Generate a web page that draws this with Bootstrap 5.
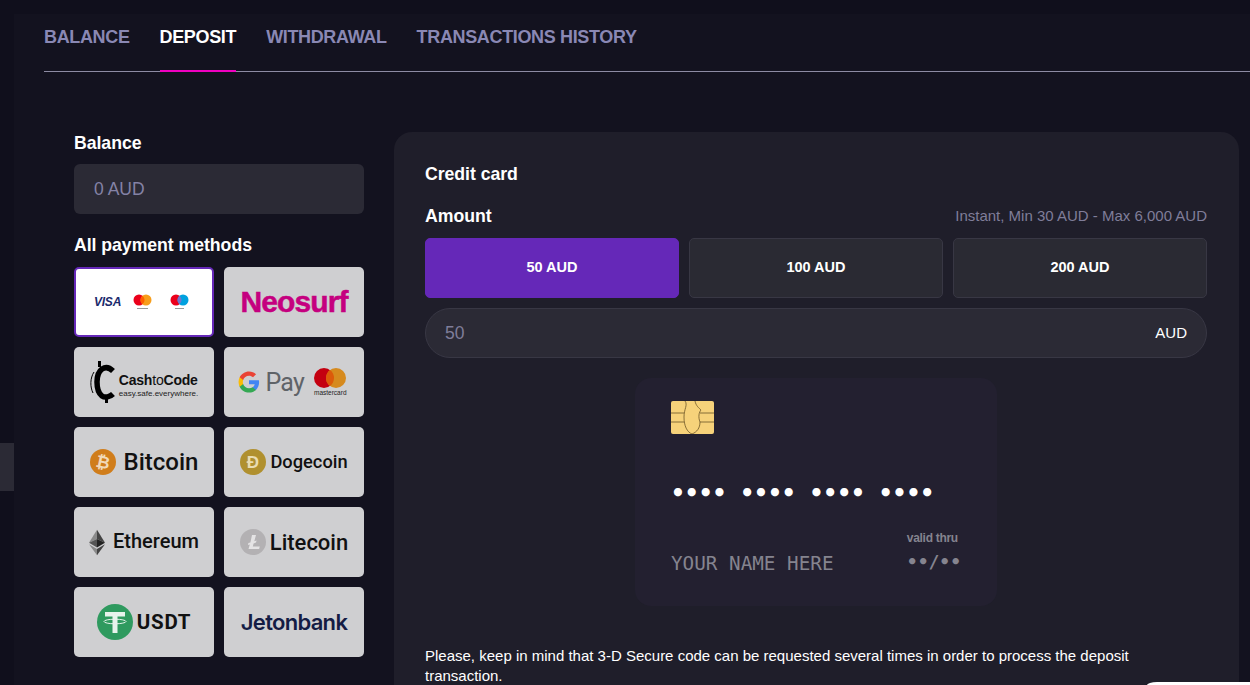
<!DOCTYPE html>
<html lang="en">
<head>
    <meta charset="UTF-8">
    <meta name="viewport" content="width=device-width, initial-scale=1.0">
    <title>Deposit</title>
    <link href="https://cdn.jsdelivr.net/npm/bootstrap@5.3.0/dist/css/bootstrap.min.css" rel="stylesheet">
    <style>
        html, body { height: 100%; }
        body { background: #100f1c; font-family: "Liberation Sans", Arial, sans-serif; color: #fff; overflow: hidden; }
        .shell { height: 685px; padding-top: 14px; overflow: hidden; }
        .side-rail { width: 14px; flex: none; padding-top: 429px; }
        .side-stub { height: 48px; background: #2b2a35; }
        .main-area { background: #13121f; padding-left: 30px; min-width: 0; }
        .tab-bar { height: 58px; border-bottom: 1px solid #8d8ba3; gap: 30px; }
        .tab-bar .nav-link { padding: 0; height: 58px; line-height: 46px; color: #8a88b4; font-size: 18px; font-weight: 700; letter-spacing: -.35px; }
        .tab-bar .nav-link.active { color: #fff; border-bottom: 2px solid #f000c0; }
        .content-wrap { padding: 60px 11px 0 30px; gap: 30px; }
        .left-col { width: 290px; flex: none; }
        .field-label { font-size: 17.7px; font-weight: 700; line-height: 20px; letter-spacing: -.05px; }
        .label-balance { margin-top: 1px; }
        .label-methods { margin-top: 21px; }
        .balance-box { height: 50px; margin-top: 11px; padding-left: 20px; background: #2b2a35; color: #8482a6; font-size: 17.5px; border-radius: 6px; }
        .methods-grid { display: grid; grid-template-columns: 140px 140px; grid-auto-rows: 70px; gap: 10px; margin-top: 12px; }
        .method-tile { background: #cfcfd1; border-radius: 5px; color: #111; font-family: Roboto, sans-serif; font-weight: 500; }
        .method-tile.picked { background: #fff; border: 2px solid #6528b8; padding-right: 5px; }
        .maestro-mark { margin-left: 10px; }
        .deposit-panel { flex: 1; min-width: 0; height: 553px; overflow: hidden; background: #1f1e2a; border-radius: 18px 18px 0 0; padding: 31px 32px 0 31px; }
        .label-card { margin-top: 1px; }
        .amount-head { margin-top: 22px; height: 20px; }
        .limit-note { color: #7f7d99; font-size: 15px; }
        .amount-row { gap: 10px; margin-top: 12px; }
        .amount-btn { flex: 1; height: 60px; background: #2a2a33; border: 1px solid #383744; color: #fff; font-size: 14.5px; font-weight: 700; border-radius: 5px; }
        .amount-btn.active, .amount-btn:hover { background: #6528b8 !important; border-color: #6528b8 !important; color: #fff !important; }
        .amount-input { height: 50px; margin-top: 10px; padding: 0 19px; background: #2b2a35; border: 1px solid #383744; border-radius: 25px; font-size: 15px; }
        .amount-input span:first-child { color: #7f7d99; font-size: 17.5px; }
        .card-mock { width: 362px; height: 228px; margin: 20px auto 0; padding: 23px 36px 0; background: #232030; border-radius: 16px; font-family: "DejaVu Sans Mono", monospace; }
        .card-dots { font-size: 23px; line-height: 28px; margin-top: 45px; letter-spacing: 0; font-weight: 700; }
        .card-bottom { margin-top: 24px; }
        .card-name { color: #85848f; font-size: 19.3px; line-height: 24px; margin-top: 21px; }
        .card-thru { color: #85848f; font-family: "Liberation Sans", sans-serif; font-size: 12px; font-weight: 700; line-height: 14px; letter-spacing: -.3px; }
        .card-exp { color: #85848f; font-size: 18px; line-height: 24px; margin-top: 5px; font-weight: 700; }
        .secure-note { font-size: 15px; line-height: 20px; margin-top: 40px; max-width: 720px; }
        .chat-corner { position: fixed; left: 1147px; top: 682px; width: 103px; height: 3px; background: #fff; border-radius: 10px 0 0 0 / 3px 0 0 0; }
        .txt-visa { font-family: "Liberation Sans", sans-serif; font-style: italic; font-weight: 700; font-size: 12px; color: #1a2a6c; letter-spacing: -.2px; }
        .txt-neosurf { font-family: "Liberation Sans", sans-serif; font-weight: 700; font-size: 30px; color: #c5007f; letter-spacing: -.9px; line-height: 1; -webkit-text-stroke: .5px #c5007f; }
        .txt-cash { font-family: "Liberation Sans", sans-serif; font-weight: 700; font-size: 14px; line-height: 15px; color: #111; letter-spacing: -.2px; margin-top: 7px; }
        .txt-cash i { font-style: normal; font-weight: 400; }
        .txt-cash-sub { font-family: "Liberation Sans", sans-serif; font-size: 8px; line-height: 9px; margin-top: 1px; font-weight: 400; color: #222; }
        .txt-pay { font-family: Roboto, sans-serif; font-weight: 400; font-size: 25px; color: #5f6368; line-height: 1; letter-spacing: -.8px; }
        .gpay-wrap { padding-right: 4px; gap: 6px; }
        .txt-mc { font-family: "Liberation Sans", sans-serif; font-size: 6.5px; line-height: 7px; margin-top: 1px; color: #222; text-align: center; font-weight: 400; }
        .txt-bitcoin { font-size: 24px; }
        .txt-doge { font-size: 18.3px; }
        .txt-eth { font-size: 20px; line-height: 26px; margin-top: -3px; }
        .txt-ltc { font-size: 22px; }
        .txt-usdt { font-size: 20.5px; font-weight: 700; letter-spacing: .8px; }
        .txt-jeton { font-family: Inter, sans-serif; font-weight: 600; font-size: 22px; color: #141c44; letter-spacing: -.7px; }
    </style>
</head>
<body>
    <div class="shell d-flex">
        <div class="side-rail"><div class="side-stub"></div></div>
        <div class="main-area flex-grow-1">
            <ul class="nav tab-bar">
                <li class="nav-item"><a class="nav-link" href="#">BALANCE</a></li>
                <li class="nav-item"><a class="nav-link active" href="#">DEPOSIT</a></li>
                <li class="nav-item"><a class="nav-link" href="#">WITHDRAWAL</a></li>
                <li class="nav-item"><a class="nav-link" href="#">TRANSACTIONS HISTORY</a></li>
            </ul>

            <div class="content-wrap d-flex align-items-start">
                <div class="left-col">
                    <div class="field-label label-balance">Balance</div>
                    <div class="balance-box d-flex align-items-center">0 AUD</div>
                    <div class="field-label label-methods">All payment methods</div>
                    <div class="methods-grid">
                        <div class="method-tile picked d-flex align-items-center justify-content-center gap-2">
                            <span class="txt-visa">VISA</span>
                            <svg class="ms-1" width="19" height="16" viewBox="0 0 19 16"><circle cx="6" cy="6" r="5.500" fill="#eb001b"/><circle cx="13" cy="6" r="5.500" fill="#f79e1b"/><path d="M9.500 1.700a5.500 5.500 0 0 1 0 8.600a5.500 5.500 0 0 1 0-8.600z" fill="#ff5f00"/><rect x="4" y="14" width="11" height="1" fill="#999"/></svg>
                            <svg class="maestro-mark" width="19" height="16" viewBox="0 0 19 16"><circle cx="6" cy="6" r="5.500" fill="#eb001b"/><circle cx="13" cy="6" r="5.500" fill="#00a1df"/><path d="M9.500 1.700a5.500 5.500 0 0 1 0 8.600a5.500 5.500 0 0 1 0-8.600z" fill="#7375cf"/><rect x="5" y="14" width="9" height="1" fill="#999"/></svg>
                        </div>
                        <div class="method-tile d-flex align-items-center justify-content-center"><span class="txt-neosurf">Neosurf</span></div>
                        <div class="method-tile d-flex align-items-center justify-content-center gap-1">
                            <svg width="25" height="42" viewBox="0 0 25 42"><path d="M23 10C19 6 15 6 12 8C8 11 7 16 7 21C7 27 8 32 12 35C15 37 20 36 23 33" fill="none" stroke="#000" stroke-width="5.500"/><path d="M4 11C0 17 0 26 3 32" fill="none" stroke="#000" stroke-width="1"/><rect x="8" y="0" width="3" height="6" fill="#000"/><rect x="15" y="36" width="3" height="6" fill="#000"/></svg>
                            <div>
                                <div class="txt-cash">Cash<i>to</i>Code</div>
                                <div class="txt-cash-sub">easy.safe.everywhere.</div>
                            </div>
                        </div>
                        <div class="method-tile gpay-wrap d-flex align-items-center justify-content-center">
                            <svg width="22" height="22" viewBox="0 0 24 24"><path d="M23 12.300c0-.8-.1-1.600-.2-2.300H12v4.400h6.200c-.3 1.400-1.100 2.600-2.300 3.400v2.800h3.700c2.200-2 3.400-5 3.400-8.300z" fill="#4285f4"/><path d="M12 23.500c3.100 0 5.700-1 7.600-2.800l-3.700-2.900c-1 .7-2.300 1.100-3.900 1.100-3 0-5.500-2-6.400-4.700H1.800v2.900C3.700 20.900 7.600 23.500 12 23.500z" fill="#34a853"/><path d="M5.600 14.200c-.5-1.400-.5-3 0-4.400V6.900H1.800c-1.600 3.200-1.600 7 0 10.200z" fill="#fbbc04"/><path d="M12 5.100c1.700 0 3.200.6 4.400 1.700l3.300-3.300C17.700 1.600 15.100.500 12 .500 7.600.500 3.700 3.100 1.800 6.900l3.800 2.900C6.500 7.100 9 5.100 12 5.100z" fill="#ea4335"/></svg>
                            <span class="txt-pay">Pay</span>
                            <div class="ms-1">
                                <svg class="d-block" width="32" height="20" viewBox="0 0 32 20"><circle cx="10" cy="10" r="10" fill="#c40010"/><circle cx="22" cy="10" r="10" fill="#d68a1e"/><path d="M16 2a10 10 0 0 1 0 16a10 10 0 0 1 0-16z" fill="#dc5a0a"/></svg>
                                <div class="txt-mc">mastercard</div>
                            </div>
                        </div>
                        <div class="method-tile d-flex align-items-center justify-content-center gap-2">
                            <svg width="26" height="26" viewBox="0 0 26 26"><circle cx="13" cy="13" r="13" fill="#d07d1b"/><text x="13" y="19" text-anchor="middle" transform="rotate(12 13 13)" font-family="Liberation Sans" font-weight="700" font-size="17" fill="#f1d9b8">&#8383;</text></svg>
                            <span class="txt-bitcoin">Bitcoin</span>
                        </div>
                        <div class="method-tile d-flex align-items-center justify-content-center gap-1">
                            <svg width="26" height="26" viewBox="0 0 26 26"><circle cx="13" cy="13" r="13" fill="#b0902f"/><text x="13" y="19" text-anchor="middle" font-family="Liberation Sans" font-weight="700" font-size="17" fill="#e9dcb2">&#272;</text></svg>
                            <span class="txt-doge">Dogecoin</span>
                        </div>
                        <div class="method-tile d-flex align-items-center justify-content-center gap-2">
                            <svg width="16" height="27" viewBox="0 0 17 27"><path d="M8.500 0L0 13.700L8.500 9.900z" fill="#8a8a8a"/><path d="M8.500 0L17 13.700L8.500 9.900z" fill="#444"/><path d="M0 13.700L8.500 18.700V9.900z" fill="#555"/><path d="M17 13.700L8.500 18.700V9.900z" fill="#222"/><path d="M0 15.400L8.500 27V20.400z" fill="#8a8a8a"/><path d="M17 15.400L8.500 27V20.400z" fill="#444"/></svg>
                            <span class="txt-eth">Ethereum</span>
                        </div>
                        <div class="method-tile d-flex align-items-center justify-content-center gap-1">
                            <svg width="26" height="26" viewBox="0 0 26 26"><circle cx="13" cy="13" r="13" fill="#b3b1b3"/><path d="M12 6h4l-1.700 6.200 2.300-.8-.6 2.200-2.400.8-.8 3h7l-.7 2.600H8.500l1.300-4.600-1.900.7.500-2 2-.7z" fill="#e4e3e4"/></svg>
                            <span class="txt-ltc">Litecoin</span>
                        </div>
                        <div class="method-tile d-flex align-items-center justify-content-center gap-1">
                            <svg width="36" height="36" viewBox="0 0 36 36"><circle cx="18" cy="18" r="18" fill="#2f9a5f"/><path d="M8 8h20v4.500h-7.500V29h-5V12.500H8z" fill="#e7f3ec"/><ellipse cx="18" cy="17.500" rx="11" ry="2.300" fill="none" stroke="#e7f3ec" stroke-width="1"/></svg>
                            <span class="txt-usdt">USDT</span>
                        </div>
                        <div class="method-tile d-flex align-items-center justify-content-center"><span class="txt-jeton">Jetonbank</span></div>
                    </div>
                </div>

                <div class="deposit-panel">
                    <div class="field-label label-card">Credit card</div>
                    <div class="amount-head d-flex justify-content-between align-items-center">
                        <div class="field-label">Amount</div>
                        <div class="limit-note">Instant, Min 30 AUD - Max 6,000 AUD</div>
                    </div>
                    <div class="amount-row d-flex">
                        <button type="button" class="btn amount-btn active">50 AUD</button>
                        <button type="button" class="btn amount-btn">100 AUD</button>
                        <button type="button" class="btn amount-btn">200 AUD</button>
                    </div>
                    <div class="amount-input d-flex justify-content-between align-items-center">
                        <span>50</span><span>AUD</span>
                    </div>
                    <div class="card-mock">
                        <svg class="d-block" width="43" height="33" viewBox="0 0 43 33"><rect width="43" height="33" rx="2" fill="#f6d27a"/><path d="M14 0C17 4 13 8 13 16C13 25 16 31 21 33C26 31 29 27 29 21C27 16 28 11 30 9C28 7 25 5 24 0M0 12H13M0 21H13M29 12H43M29 21H43" fill="none" stroke="#6b5426" stroke-width=".8"/></svg>
                        <div class="card-dots">&#8226;&#8226;&#8226;&#8226; &#8226;&#8226;&#8226;&#8226; &#8226;&#8226;&#8226;&#8226; &#8226;&#8226;&#8226;&#8226;</div>
                        <div class="card-bottom d-flex justify-content-between align-items-start">
                            <div class="card-name">YOUR NAME HERE</div>
                            <div>
                                <div class="card-thru">valid thru</div>
                                <div class="card-exp">&#8226;&#8226;/&#8226;&#8226;</div>
                            </div>
                        </div>
                    </div>
                    <p class="secure-note mb-0">Please, keep in mind that 3-D Secure code can be requested several times in order to process the deposit transaction.</p>
                </div>
            </div>
        </div>
    </div>
    <div class="chat-corner"></div>

    <script src="https://cdn.jsdelivr.net/npm/bootstrap@5.3.0/dist/js/bootstrap.bundle.min.js"></script>
</body>
</html>
